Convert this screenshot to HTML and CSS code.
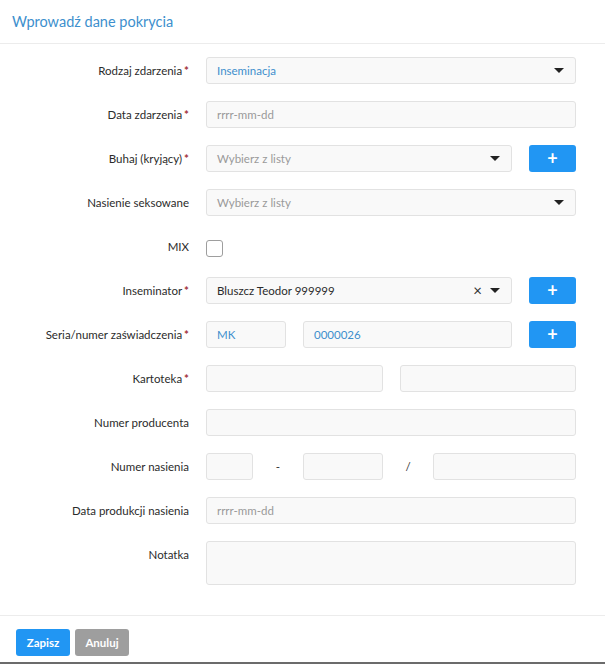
FILE: index.html
```html
<!DOCTYPE html>
<html>
<head>
	<meta charset="utf-8">
	<title>Wprowadź dane pokrycia</title>
	<link rel="stylesheet" href="styles.css">
</head>
<body>
	<div class="modal">
		<div class="modal-header">
			<h1>Wprowadź dane pokrycia</h1>
		</div>

		<div class="modal-body">
			<div class="row">
				<label>Rodzaj zdarzenia<span class="req">*</span></label>
				<div class="controls">
					<div class="field select wide">
						<span class="value">Inseminacja</span>
						<span class="caret"></span>
					</div>
				</div>
			</div>

			<div class="row">
				<label>Data zdarzenia<span class="req">*</span></label>
				<div class="controls">
					<div class="field wide"><span class="placeholder">rrrr-mm-dd</span></div>
				</div>
			</div>

			<div class="row">
				<label>Buhaj (kryjący)<span class="req">*</span></label>
				<div class="controls">
					<div class="field select wide">
						<span class="placeholder">Wybierz z listy</span>
						<span class="caret"></span>
					</div>
					<button class="btn btn-add">+</button>
				</div>
			</div>

			<div class="row">
				<label>Nasienie seksowane</label>
				<div class="controls">
					<div class="field select wide">
						<span class="placeholder">Wybierz z listy</span>
						<span class="caret"></span>
					</div>
				</div>
			</div>

			<div class="row">
				<label>MIX</label>
				<div class="controls">
					<span class="checkbox"></span>
				</div>
			</div>

			<div class="row">
				<label>Inseminator<span class="req">*</span></label>
				<div class="controls">
					<div class="field select wide">
						<span class="value dark">Bluszcz Teodor 999999</span>
						<span class="clear">&times;</span>
						<span class="caret"></span>
					</div>
					<button class="btn btn-add">+</button>
				</div>
			</div>

			<div class="row">
				<label>Seria/numer zaświadczenia<span class="req">*</span></label>
				<div class="controls">
					<div class="field w-seria"><span class="value">MK</span></div>
					<div class="field wide"><span class="value">0000026</span></div>
					<button class="btn btn-add">+</button>
				</div>
			</div>

			<div class="row">
				<label>Kartoteka<span class="req">*</span></label>
				<div class="controls">
					<div class="field wide"></div>
					<div class="field wide"></div>
				</div>
			</div>

			<div class="row">
				<label>Numer producenta</label>
				<div class="controls">
					<div class="field wide"></div>
				</div>
			</div>

			<div class="row">
				<label>Numer nasienia</label>
				<div class="controls">
					<div class="field w-small"></div>
					<span class="sep">-</span>
					<div class="field w-mid"></div>
					<span class="sep">/</span>
					<div class="field wide"></div>
				</div>
			</div>

			<div class="row">
				<label>Data produkcji nasienia</label>
				<div class="controls">
					<div class="field wide"><span class="placeholder">rrrr-mm-dd</span></div>
				</div>
			</div>

			<div class="row">
				<label>Notatka</label>
				<div class="controls">
					<div class="field wide textarea"></div>
				</div>
			</div>
		</div>

		<div class="modal-footer">
			<button class="btn btn-primary">Zapisz</button>
			<button class="btn btn-default">Anuluj</button>
		</div>
	</div>
</body>
</html>
```

FILE: styles.css
```css
body {
	margin: 0;
	padding: 0;
	background-color: #ffffff;
	font-family: Lato, 'Open Sans', Arial, sans-serif;
	font-size: 11.5px;
	color: #2b2b2b;
}

.modal {
	width: 605px;
	height: 662px;
	border-bottom: 2px solid #6b6b6b;
	display: flex;
	flex-direction: column;
}

.modal-header {
	height: 44px;
	border-bottom: 1px solid #ececec;
	box-sizing: border-box;
	padding: 0 12px;
	display: flex;
	align-items: center;
}

.modal-header h1 {
	margin: 0;
	font-size: 14.5px;
	font-weight: normal;
	color: #3d8fcd;
}

.modal-body {
	padding: 13px 29px 0 0;
	flex: 1;
	border-bottom: 1px solid #ececec;
}

.row {
	display: flex;
	align-items: flex-start;
	margin-bottom: 17px;
}

.row label {
	width: 190px;
	flex: 0 0 190px;
	text-align: right;
	line-height: 27px;
	font-size: 11.5px;
	margin-right: 16px;
	padding-right: 1px;
	box-sizing: border-box;
}

.req {
	color: #a3333a;
	font-weight: bold;
	margin-left: 2px;
}

.controls {
	flex: 1;
	display: flex;
	align-items: center;
	gap: 17px;
	min-height: 27px;
}

.field {
	height: 27px;
	box-sizing: border-box;
	border: 1px solid #e2e2e2;
	border-radius: 3px;
	background-color: #f9f9f9;
	display: flex;
	align-items: center;
	padding: 0 10px;
	font-size: 11.5px;
}

.wide {
	flex: 1;
}

.w-seria {
	width: 80px;
	flex: 0 0 80px;
}

.w-small {
	width: 47px;
	flex: 0 0 47px;
}

.w-mid {
	width: 80px;
	flex: 0 0 80px;
}

.textarea {
	height: 44px;
}

.value {
	color: #3d8fcd;
	flex: 1;
}

.value.dark {
	color: #2b2b2b;
}

.placeholder {
	color: #9a9a9a;
	flex: 1;
}

.caret {
	width: 0;
	height: 0;
	border-left: 5px solid transparent;
	border-right: 5px solid transparent;
	border-top: 5px solid #222222;
	margin-right: 1px;
}

.clear {
	font-size: 15px;
	color: #333333;
	margin-right: 8px;
	line-height: 1;
}

.checkbox {
	width: 15px;
	height: 15px;
	border: 1px solid #9e9e9e;
	border-radius: 3px;
	margin-top: 7px;
	align-self: flex-start;
	background-color: #ffffff;
}

.sep {
	width: 16px;
	text-align: center;
	color: #333333;
}

.btn {
	height: 27px;
	border: none;
	border-radius: 3px;
	font-family: Lato, 'Open Sans', Arial, sans-serif;
	font-size: 11.5px;
	font-weight: bold;
	color: #ffffff;
	cursor: pointer;
}

.btn-add {
	width: 47px;
	flex: 0 0 47px;
	background-color: #2196f3;
	font-size: 18px;
	line-height: 27px;
	padding: 0;
}

.modal-footer {
	padding: 13px 16px 6px 16px;
	display: flex;
	gap: 5px;
}

.btn-primary {
	width: 54px;
	background-color: #2196f3;
}

.btn-default {
	width: 54px;
	background-color: #9e9e9e;
}
```
